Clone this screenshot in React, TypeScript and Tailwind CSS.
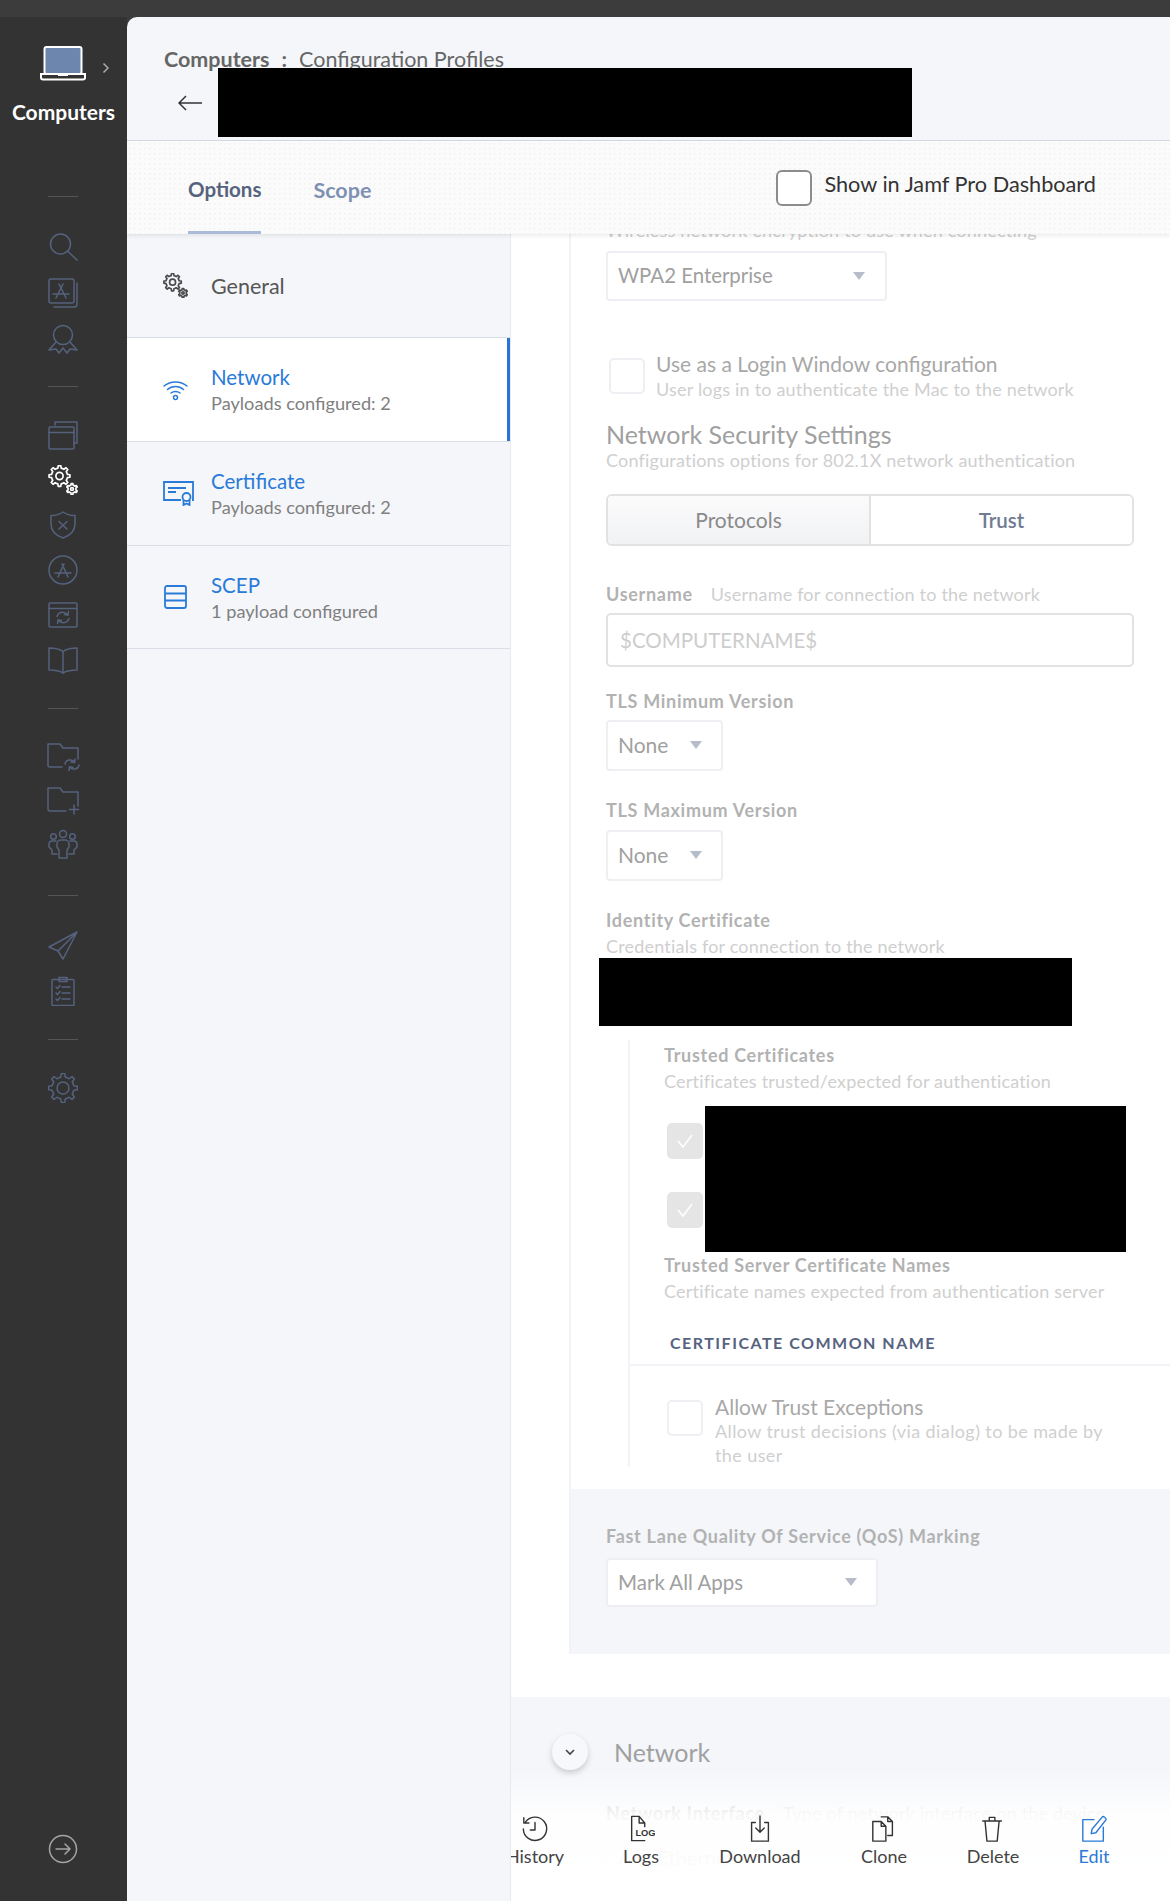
import type { ReactNode } from 'react'

// gear outline, used by a few of the sidebar icons
function gearPath(cx: number, cy: number, outer: number, inner: number, teeth: number) {
  const pts: string[] = []
  const step = (Math.PI * 2) / teeth
  for (let i = 0; i < teeth; i++) {
    const a = i * step - Math.PI / 2
    const list: [number, number][] = [
      [inner, a - step * 0.5],
      [inner, a - step * 0.27],
      [outer, a - step * 0.15],
      [outer, a + step * 0.15],
      [inner, a + step * 0.27],
    ]
    list.forEach(([r, t]) => pts.push(`${(cx + r * Math.cos(t)).toFixed(2)} ${(cy + r * Math.sin(t)).toFixed(2)}`))
  }
  return `M${pts.join('L')}Z`
}

function Ico({ children, className = '', size = 30 }: { children: ReactNode; className?: string; size?: number }) {
  return (
    <svg
      width={size}
      height={size}
      viewBox="0 0 30 30"
      fill="none"
      stroke="currentColor"
      strokeWidth="1.5"
      strokeLinecap="round"
      strokeLinejoin="round"
      className={className}
    >
      {children}
    </svg>
  )
}

function Gears({ className = '', size = 30, width = 1.5 }: { className?: string; size?: number; width?: number }) {
  return (
    <Ico className={className} size={size}>
      <g strokeWidth={width}>
        <path d={gearPath(11.5, 11, 10.5, 8, 8)} />
        <circle cx="11.5" cy="11" r="3.6" />
        <path d={gearPath(24, 24, 5.5, 4, 6)} />
        <circle cx="24" cy="24" r="1.4" />
      </g>
    </Ico>
  )
}

function Divider({ className = '' }: { className?: string }) {
  return <div className={`h-px w-[30px] bg-[#555555] ${className}`} />
}

function SideIcon({ children }: { children: ReactNode }) {
  return <div className="flex h-[30px] w-[30px] items-center justify-center text-[#55627e]">{children}</div>
}

function Sidebar() {
  return (
    <aside className="flex h-full w-[127px] shrink-0 flex-col items-center bg-[#333333]">
      <div className="relative mt-[28px] h-[40px] w-[127px]">
        <svg width="46" height="38" viewBox="0 0 46 38" className="mx-auto block -translate-x-px">
          <rect x="4.5" y="2" width="37" height="27" rx="2" fill="#6d86ad" stroke="#ffffff" strokeWidth="2" />
          <path d="M1 29h44v3.5a2 2 0 0 1-2 2H3a2 2 0 0 1-2-2z" fill="#333333" stroke="#ffffff" strokeWidth="2" />
          <path d="M18 30h10" stroke="#ffffff" strokeWidth="2" />
        </svg>
        <svg width="8" height="12" viewBox="0 0 8 12" className="absolute left-[102px] top-[17px]" fill="none" stroke="#a9a9a9" strokeWidth="1.5">
          <path d="M1.5 1.5 6 6l-4.500 4.500" />
        </svg>
      </div>
      <div className="mt-[15px] text-[21px] font-bold leading-[24px] text-white">Computers</div>

      <Divider className="mt-[72px] -translate-x-px" />
      <div className="mt-[35px] flex -translate-x-px flex-col gap-[16px]">
        <SideIcon>
          <Ico>
            <circle cx="12.500" cy="12" r="10" />
            <path d="m20 19.500 9 8.500" />
          </Ico>
        </SideIcon>
        <SideIcon>
          <Ico>
            <rect x="1" y="1" width="25" height="24" rx="2" />
            <path d="M29 5v21a3 3 0 0 1-3 3H6" />
            <path d="m8 20 7-14M18 20 11 6M5 16h16" />
          </Ico>
        </SideIcon>
        <SideIcon>
          <Ico>
            <circle cx="15" cy="11" r="9.500" />
            <path d="M8 18 1 26l7-1 3 4 4-5 4 5 3-4 7 1-7-8" />
          </Ico>
        </SideIcon>
      </div>

      <Divider className="mt-[32px] -translate-x-px" />
      <div className="mt-[33px] flex -translate-x-px flex-col gap-[15px]">
        <SideIcon>
          <Ico>
            <path d="M7 5V2h22v21h-3" />
            <rect x="1" y="7" width="25" height="22" rx="1" />
            <path d="M1 12.500h25" />
          </Ico>
        </SideIcon>
        <SideIcon>
          <Gears className="text-white" width={1.7} />
        </SideIcon>
        <SideIcon>
          <Ico>
            <path d="M15 2c3.500 2.500 7.500 3.500 12 3.500V14c0 6.500-5 11.500-12 14C8 25.500 3 20.500 3 14V5.500C7.500 5.500 11.500 4.500 15 2z" />
            <path d="m11 11.500 8 7.500M19 11.500 11 19" />
          </Ico>
        </SideIcon>
        <SideIcon>
          <Ico>
            <circle cx="15" cy="15" r="14" />
            <path d="m10 22 6-13M20 22 14 9M7 18h16" />
          </Ico>
        </SideIcon>
        <SideIcon>
          <Ico>
            <rect x="1" y="3" width="28" height="24" rx="1" />
            <path d="M1 8.500h28" />
            <path d="M9 16.500c1-3 4-4.500 7-4 2 .3 3 1.200 4 2.500M21 18.500c-1 3-4 4.500-7 4-2-.3-3-1.200-4-2.500" />
            <path d="m20.500 11.500-.5 3.500-3.500-.500M9.500 23.500l.500-3.500 3.500.500" />
          </Ico>
        </SideIcon>
        <SideIcon>
          <Ico>
            <path d="M15 6.500C11 3.500 6 3 1 3v22c5 0 10 .5 14 3 4-2.500 9-3 14-3V3c-5 0-10 .5-14 3.500z" />
            <path d="M15 6.500V28" />
          </Ico>
        </SideIcon>
      </div>

      <Divider className="mt-[33px] -translate-x-px" />
      <div className="mt-[32px] flex -translate-x-px flex-col gap-[14px]">
        <SideIcon>
          <svg width="34" height="30" viewBox="0 0 34 30" fill="none" stroke="currentColor" strokeWidth="1.500" strokeLinecap="round" strokeLinejoin="round" className="shrink-0 translate-x-[1px]">
            <path d="M15 26H3a2 2 0 0 1-2-2V3h12l3 4h15v11" />
            <path d="M18 23c.6-2.800 3-4.300 5.800-3.900 1.500.2 2.700 1 3.700 2.200M32 24c-.6 2.800-3 4.300-5.800 3.900-1.500-.2-2.700-1-3.700-2.200" />
            <path d="m28 18-.5 3.500-3.500-.5M22 29.500l.5-3.500 3.500.5" />
          </svg>
        </SideIcon>
        <SideIcon>
          <svg width="34" height="30" viewBox="0 0 34 30" fill="none" stroke="currentColor" strokeWidth="1.500" strokeLinecap="round" strokeLinejoin="round" className="shrink-0 translate-x-[1px]">
            <path d="M19 26H3a2 2 0 0 1-2-2V3h12l3 4h15v14" />
            <path d="M27 20v9M22.500 24.500h9" />
          </svg>
        </SideIcon>
        <SideIcon>
          <Ico>
            <circle cx="15" cy="5" r="3.500" />
            <circle cx="5.500" cy="7.500" r="2.800" />
            <circle cx="24.500" cy="7.500" r="2.800" />
            <path d="M11 29V21l-2-3v-3a4 4 0 0 1 4-4h4a4 4 0 0 1 4 4v3l-2 3v8z" />
            <path d="M8 12H4a3 3 0 0 0-3 3v3l3 3v4h5M22 12h4a3 3 0 0 1 3 3v3l-3 3v4h-5" />
          </Ico>
        </SideIcon>
      </div>

      <Divider className="mt-[36px] -translate-x-px" />
      <div className="mt-[34px] flex -translate-x-px flex-col gap-[16px]">
        <SideIcon>
          <Ico>
            <path d="M29 2 1 17l9 4 5 8zM29 2 10 21" />
          </Ico>
        </SideIcon>
        <SideIcon>
          <Ico>
            <rect x="4" y="3.500" width="22" height="26" rx="1" />
            <path d="M11 1.500h8v4h-8zM14 11h8M14 17h8M14 23h8" />
            <path d="m8 11 1.500 1.500L12 9.500M8 17l1.500 1.500L12 15.500M8 23l1.500 1.500L12 21.500" />
          </Ico>
        </SideIcon>
      </div>

      <Divider className="mt-[33px] -translate-x-px" />
      <div className="mt-[33px] -translate-x-px">
        <SideIcon>
          <Ico>
            <path d={gearPath(15, 15, 14.500, 11, 8)} />
            <circle cx="15" cy="15" r="6" />
          </Ico>
        </SideIcon>
      </div>

      <div className="mb-[37px] mt-auto -translate-x-px text-[#a5a5a5]">
        <Ico size={30}>
          <circle cx="15" cy="15" r="13.500" />
          <path d="M8 15h14M17 10l5 5-5 5" />
        </Ico>
      </div>
    </aside>
  )
}

function NavItem({
  icon,
  title,
  sub,
  active,
  height,
}: {
  icon: ReactNode
  title: string
  sub?: string
  active?: boolean
  height: string
}) {
  return (
    <div
      className={`relative flex ${height} items-center border-b border-[#d9dde5] pl-[36px] ${
        active ? 'bg-white' : ''
      }`}
    >
      <div className="w-[48px] shrink-0">{icon}</div>
      <div className="pt-px">
        <div className={sub ? 'text-[20.500px] leading-[24px] text-[#2a7ad8]' : 'text-[21.500px] leading-[24px] text-[#555555]'}>{title}</div>
        {sub && <div className="mt-[2px] text-[18.200px] leading-[24px] text-[#808080]">{sub}</div>}
      </div>
      {active && <div className="absolute right-0 top-0 bottom-0 w-[3px] bg-[#2a74d6]" />}
    </div>
  )
}

function SideNav() {
  return (
    <nav className="h-full w-[384px] shrink-0 border-r border-[#e6e9ef] bg-[#f4f6fa]">
      <NavItem
        height="h-[104px]"
        title="General"
        icon={<Gears size={25} className="text-[#4a4a4a]" width={2} />}
      />
      <NavItem
        height="h-[104px]"
        active
        title="Network"
        sub="Payloads configured: 2"
        icon={
          <svg width="25" height="22" viewBox="0 0 25 22" fill="none" stroke="#2a7ad8" strokeWidth="1.500" strokeLinecap="round">
            <path d="M1 7c6.500-5.500 16.500-5.500 23 0M4.500 10.500c4.500-4 11.500-4 16 0M8 14c2.500-2 6.500-2 9 0" />
            <circle cx="12.500" cy="18.500" r="2" />
          </svg>
        }
      />
      <NavItem
        height="h-[104px]"
        title="Certificate"
        sub="Payloads configured: 2"
        icon={
          <svg width="31" height="25" viewBox="0 0 31 25" fill="none" stroke="#2a7ad8" strokeWidth="1.800">
            <path d="M18 19H1V1h29v18h-1" />
            <path d="M5 7h18M5 11h8" />
            <circle cx="23.500" cy="16" r="4" />
            <path d="M20.500 19v5l3-1.500 3 1.500v-5" />
          </svg>
        }
      />
      <NavItem
        height="h-[103px]"
        title="SCEP"
        sub="1 payload configured"
        icon={
          <svg width="23" height="24" viewBox="0 0 23 24" fill="none" stroke="#2a7ad8" strokeWidth="1.800" className="ml-[1px]">
            <rect x="1" y="1" width="21" height="22" rx="2" />
            <path d="M1 8.500h21M1 15.500h21" />
          </svg>
        }
      />
    </nav>
  )
}

function SelectBox({ label, className }: { label: string; className: string }) {
  return (
    <div className={`flex items-center justify-between rounded-[4px] border-2 border-[#eeeff2] bg-white pl-[10px] pb-px text-[#a0a0a0] ${className}`}>
      <span>{label}</span>
      <span className="h-0 w-0 border-x-[6px] border-t-[8px] border-x-transparent border-t-[#b6bcc9]" />
    </div>
  )
}

function CheckBox({ checked, className = '' }: { checked?: boolean; className?: string }) {
  if (checked) {
    return (
      <div className={`flex h-[36px] w-[36px] shrink-0 items-center justify-center rounded-[5px] bg-[#e5e5e5] ${className}`}>
        <svg width="18" height="16" viewBox="0 0 18 16" fill="none" stroke="#ffffff" strokeWidth="1.500">
          <path d="m2 8 5 6L16 2" />
        </svg>
      </div>
    )
  }
  return <div className={`h-[36px] w-[36px] shrink-0 rounded-[5px] border-2 border-[#eeeff2] bg-white ${className}`} />
}

function FieldLabel({ children, className = '' }: { children: ReactNode; className?: string }) {
  return <div className={`text-[18px] font-bold leading-[20px] tracking-[0.700px] text-[#b2b2b2] ${className}`}>{children}</div>
}

function Hint({ children, className = '' }: { children: ReactNode; className?: string }) {
  return <div className={`text-[18px] leading-[20px] tracking-[0.200px] text-[#cfcfcf] ${className}`}>{children}</div>
}

function Form() {
  return (
    <div className="ml-[58px] border-l-2 border-[#f1f3f7] pl-[35px] pr-[36px]">
      <Hint className="-mt-[14px]">Wireless network encryption to use when connecting</Hint>
      <SelectBox label="WPA2 Enterprise" className="mt-[11px] h-[50px] w-[281px] pr-[20px] text-[20.400px]" />

      <div className="mt-[53px] flex gap-[11px]">
        <CheckBox className="ml-[3px] mt-[4px]" />
        <div>
          <div className="text-[21px] leading-[20px] text-[#a8a8a8]">Use as a Login Window configuration</div>
          <Hint className="mt-[5px]">User logs in to authenticate the Mac to the network</Hint>
        </div>
      </div>

      <div className="mt-[20px] text-[25px] leading-[30px] text-[#a0a0a0]">Network Security Settings</div>
      <Hint className="mt-px tracking-[0.100px]">Configurations options for 802.1X network authentication</Hint>

      <div className="mt-[24px] flex h-[52px] overflow-hidden rounded-[6px] border-2 border-[#e2e2e2] text-[21px]">
        <div className="flex w-[263px] items-center justify-center border-r-2 border-[#e2e2e2] bg-gradient-to-b from-[#fbfbfc] to-[#f1f2f4] text-[#8a8a8a]">
          Protocols
        </div>
        <div className="flex flex-1 items-center justify-center bg-white text-[20.500px] font-semibold text-[#6f7b93]">Trust</div>
      </div>

      <div className="mt-[38px] flex gap-[18px]">
        <FieldLabel>Username</FieldLabel>
        <Hint>Username for connection to the network</Hint>
      </div>
      <div className="mt-[9px] flex h-[54px] items-center rounded-[5px] border-2 border-[#e2e2e2] bg-white pl-[12px] text-[20.500px] text-[#cdcdcd]">
        $COMPUTERNAME$
      </div>

      <FieldLabel className="mt-[24px]">TLS Minimum Version</FieldLabel>
      <SelectBox label="None" className="mt-[9px] h-[51px] w-[117px] pr-[19px] text-[21px]" />

      <FieldLabel className="mt-[29px]">TLS Maximum Version</FieldLabel>
      <SelectBox label="None" className="mt-[10px] h-[51px] w-[117px] pr-[19px] text-[21px]" />

      <FieldLabel className="mt-[29px]">Identity Certificate</FieldLabel>
      <Hint className="mt-[6px]">Credentials for connection to the network</Hint>
      <div className="-ml-[7px] mt-[2px] h-[68px] w-[473px] bg-black" />

      <div className="-mr-[36px] ml-[22px] mt-[14px] border-l-2 border-[#f1f3f7]">
        <div className="pl-[34px] pt-[5px]">
          <FieldLabel>Trusted Certificates</FieldLabel>
          <Hint className="mt-[6px]">Certificates trusted/expected for authentication</Hint>
          <div className="mt-[15px] flex">
            <div className="ml-[3px] flex flex-col gap-[33px] pt-[17px]">
              <CheckBox checked />
              <CheckBox checked />
            </div>
            <div className="ml-[2px] h-[146px] w-[421px] bg-black" />
          </div>
          <FieldLabel className="mt-[3px]">Trusted Server Certificate Names</FieldLabel>
          <Hint className="mt-[6px]">Certificate names expected from authentication server</Hint>
          <div className="ml-[6px] mt-[32px] text-[16px] font-bold leading-[20px] tracking-[1.500px] text-[#56637f]">
            CERTIFICATE COMMON NAME
          </div>
        </div>
        <div className="mt-[11px] h-[2px] bg-[#f1f3f7]" />
        <div className="flex gap-[12px] pl-[37px] pt-[31px]">
          <CheckBox className="mt-[3px]" />
          <div className="w-[400px]">
            <div className="text-[21px] leading-[20px] text-[#a8a8a8]">Allow Trust Exceptions</div>
            <div className="mt-[2px] text-[18px] leading-[24px] tracking-[0.400px] text-[#cfcfcf]">
              Allow trust decisions (via dialog) to be made by the user
            </div>
          </div>
        </div>
      </div>

      <div className="-ml-[35px] -mr-[36px] mt-[22px] h-[165px] bg-[#f4f6fa] pl-[35px] pt-[37px]">
        <FieldLabel>Fast Lane Quality Of Service (QoS) Marking</FieldLabel>
        <SelectBox label="Mark All Apps" className="mt-[12px] h-[49px] w-[272px] pr-[19px] text-[20.500px]" />
      </div>
    </div>
  )
}

function NetworkSection() {
  return (
    <div className="mt-[43px] h-[300px] bg-[#f4f6fa]">
      <div className="flex items-center pl-[41px] pt-[37px]">
        <div className="flex h-[36px] w-[36px] items-center justify-center rounded-full bg-[#f7f8fb] shadow-[0_3px_6px_rgba(0,0,0,0.18)]">
          <svg width="10" height="7" viewBox="0 0 10 7" fill="none" stroke="#444444" strokeWidth="1.600">
            <path d="m1 1 4 4 4-4" />
          </svg>
        </div>
        <div className="ml-[26px] text-[25px] leading-[30px] text-[#a0a0a0]">Network</div>
      </div>
      <div className="ml-[95px] mt-[33px] flex gap-[18px]">
        <FieldLabel>Network Interface</FieldLabel>
        <Hint>Type of network interface on the device</Hint>
      </div>
      <div className="ml-[95px] mt-[9px] flex h-[50px] w-[300px] items-center rounded-[4px] border-2 border-[#eeeff2] pl-[10px] text-[20px] text-[#a0a0a0]">
        Any Ethernet
      </div>
    </div>
  )
}

function ToolItem({ icon, label, className, blue }: { icon: ReactNode; label: string; className: string; blue?: boolean }) {
  return (
    <div className={`absolute top-[45px] flex w-[120px] flex-col items-center ${className}`}>
      <div className="h-[30px]">{icon}</div>
      <div className={`-mt-px text-[18px] leading-[24px] ${blue ? 'text-[#2a7ad8]' : 'text-[#444444]'}`}>{label}</div>
    </div>
  )
}

// sits over the scrolling form, fades the content below it
function Toolbar() {
  return (
    <div className="absolute bottom-0 left-0 right-0 h-[131px] bg-gradient-to-b from-white/0 via-white/90 via-35% to-white text-[#333333]">
      <ToolItem
        className="left-[-36px]"
        label="History"
        icon={
          <Ico size={28}>
            <path d="M4.500 8A12.500 12.500 0 1 1 2.500 15" />
            <path d="M3 3v5.500h5.500M15 8v8h-5" />
          </Ico>
        }
      />
      <ToolItem
        className="left-[70px]"
        label="Logs"
        icon={
          <Ico size={28}>
            <path d="M19 27.500H5V1.500h8l6 7v4M13 1.500v7h6" />
            <text x="9" y="22" fontSize="10" fontWeight="700" fill="currentColor" stroke="none" fontFamily="Liberation Sans, sans-serif">LOG</text>
          </Ico>
        }
      />
      <ToolItem
        className="left-[189px]"
        label="Download"
        icon={
          <Ico size={28}>
            <path d="M10 8H6v20h18V8h-4M15 1v17M10.500 14l4.500 4.500 4.500-4.500" />
          </Ico>
        }
      />
      <ToolItem
        className="left-[313px]"
        label="Clone"
        icon={
          <Ico size={28}>
            <path d="M3 7h9l5 5v16H3zM12 7v5h5" />
            <path d="M12 2h7l5 5v15h-5M19 2v5h5" />
          </Ico>
        }
      />
      <ToolItem
        className="left-[422px]"
        label="Delete"
        icon={
          <Ico size={28}>
            <path d="M4 6.500h20M11 6V2.500h6V6M6.500 7l2 21h11l2-21" />
          </Ico>
        }
      />
      <ToolItem
        className="left-[523px]"
        label="Edit"
        blue
        icon={
          <Ico size={28} className="text-[#2a7ad8]">
            <path d="M15 5H3v23h22V13" />
            <path d="m12 20 1-5L24 2c1-1 4 1 4 3L17 19z" />
          </Ico>
        }
      />
    </div>
  )
}

export default function App() {
  return (
    <div className="flex h-[1901px] w-[1170px] flex-col overflow-hidden bg-[#3c3c3c] font-['Lato',sans-serif]">
      <div className="h-[17px] shrink-0" />
      <div className="flex min-h-0 flex-1">
        <Sidebar />
        <main className="flex min-w-0 flex-1 flex-col overflow-hidden rounded-tl-[10px] bg-[#f4f6fa]">
          <header className="h-[124px] shrink-0 border-b border-[#d5d9e2] pl-[37px] pt-[30px]">
            <div className="text-[21.500px] leading-[24px] text-[#666666]">
              <span className="font-bold">Computers</span>
              <span className="mx-[12px] font-bold">:</span>
              <span>Configuration Profiles</span>
            </div>
            <div className="-mt-[3px] flex items-center">
              <svg width="24" height="16" viewBox="0 0 24 16" fill="none" stroke="#333333" strokeWidth="1.500" className="ml-[14px]">
                <path d="M24 8H1M8 1 1 8l7 7" />
              </svg>
              <div className="ml-[16px] h-[69px] w-[694px] bg-black" />
            </div>
          </header>

          <div className="relative z-10 flex h-[93px] shrink-0 bg-[#fbfbfb] bg-[radial-gradient(#f3f3f3_1px,transparent_1px)] bg-[length:5px_5px] pl-[61px] shadow-[0_2px_4px_rgba(0,0,0,0.08)]">
            <div className="flex h-full items-center border-b-[3px] border-[#a9bbd8] pt-[6px] text-[20.500px] font-bold text-[#56637f]">
              Options
            </div>
            <div className="ml-[52px] flex h-full items-center pt-[6px] text-[21.500px] font-bold text-[#7f91b3]">Scope</div>
            <div className="ml-auto flex pr-[74px] pt-[29px]">
              <div className="h-[36px] w-[36px] rounded-[6px] border-2 border-[#8c8c8c] bg-white" />
              <div className="ml-[12px] -mt-[4px] text-[21.700px] leading-[36px] text-[#333333]">Show in Jamf Pro Dashboard</div>
            </div>
          </div>

          <div className="flex min-h-0 flex-1">
            <SideNav />
            <section className="relative min-w-0 flex-1 overflow-hidden bg-white">
              <Form />
              <NetworkSection />
              <Toolbar />
            </section>
          </div>
        </main>
      </div>
    </div>
  )
}
